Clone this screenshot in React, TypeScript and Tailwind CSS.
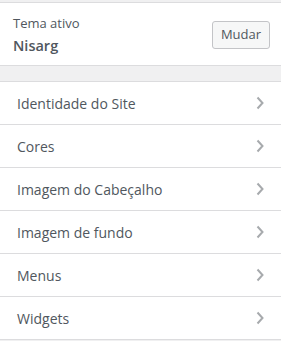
import React from "react";

const items = [
  "Identidade do Site",
  "Cores",
  "Imagem do Cabeçalho",
  "Imagem de fundo",
  "Menus",
  "Widgets",
];

function Chevron() {
  return (
    <svg width="8" height="14" viewBox="0 0 8 14" className="shrink-0">
      <path d="M1.5 1.5 L6.5 7 L1.5 12.5" fill="none" stroke="#a7aaad" strokeWidth="2" />
    </svg>
  );
}

export default function App() {
  return (
    <div
      className="w-[281px] h-[341px] bg-[#f0f0f1] overflow-hidden"
      style={{ fontFamily: '"Open Sans", "Noto Sans", sans-serif' }}
    >
      <div className="h-[2px]" />
      <div className="bg-white border-y border-[#dcdcde] h-[64px] flex items-start justify-between pl-[13px] pr-[11px]">
        <div className="flex flex-col pt-[11px]">
          <span className="text-[13px] leading-[18px] text-[#50575e]">Tema ativo</span>
          <span className="text-[14.5px] leading-[20px] font-semibold text-[#50575e] mt-[4px]">Nisarg</span>
        </div>
        <button className="mt-[18px] h-[28px] w-[58px] rounded-[3px] border border-[#c3c4c7] bg-[#f6f7f7] text-[13px] text-[#50575e] flex items-center justify-center">
          Mudar
        </button>
      </div>
      <div className="h-[15px]" />
      <div className="bg-white border-t border-[#dcdcde]">
        {items.map((t) => (
          <div
            key={t}
            className="h-[43px] border-b border-[#dcdcde] flex items-center justify-between pl-[17px] pr-[17px]"
          >
            <span className="text-[14px] font-medium text-[#50575e]">{t}</span>
            <Chevron />
          </div>
        ))}
      </div>
    </div>
  );
}
